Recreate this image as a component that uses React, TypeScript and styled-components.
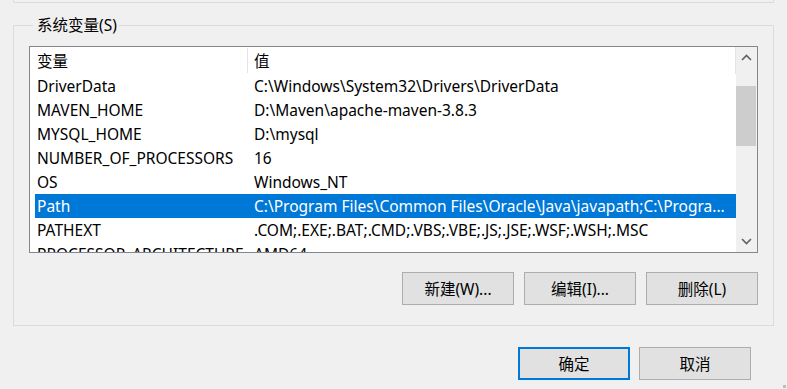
import { FC } from 'react'
import styled, { createGlobalStyle } from 'styled-components'

const GlobalStyle = createGlobalStyle`
  html, body {
    margin: 0;
    padding: 0;
    background: #f0f0f0;
  }
  body {
    font-family: 'Noto Sans', 'Noto Sans CJK SC', sans-serif;
    font-size: 15.5px;
    color: #000;
  }
`

type Row = { name: string; value: string; selected?: boolean }

const rows: Row[] = [
  { name: 'DriverData', value: 'C:\\Windows\\System32\\Drivers\\DriverData' },
  { name: 'MAVEN_HOME', value: 'D:\\Maven\\apache-maven-3.8.3' },
  { name: 'MYSQL_HOME', value: 'D:\\mysql' },
  { name: 'NUMBER_OF_PROCESSORS', value: '16' },
  { name: 'OS', value: 'Windows_NT' },
  {
    name: 'Path',
    value: 'C:\\Program Files\\Common Files\\Oracle\\Java\\javapath;C:\\Progra...',
    selected: true,
  },
  { name: 'PATHEXT', value: '.COM;.EXE;.BAT;.CMD;.VBS;.VBE;.JS;.JSE;.WSF;.WSH;.MSC' },
  { name: 'PROCESSOR_ARCHITECTURE', value: 'AMD64' },
]

const App: FC = () => {
  return (
    <Window>
      <GlobalStyle />
      <TopGroup />
      <Group>
        <Legend>系统变量(S)</Legend>
        <ListBox>
          <ListContent>
            <HeaderRow>
              <NameCell>变量</NameCell>
              <HeaderDivider />
              <ValueCell>值</ValueCell>
            </HeaderRow>
            {rows.map((r) => (
              <DataRow key={r.name} $selected={r.selected}>
                <NameCell>{r.name}</NameCell>
                <ValueCell>{r.value}</ValueCell>
              </DataRow>
            ))}
          </ListContent>
          <ScrollBar>
            <ArrowBtn>
              <svg width="11" height="7" viewBox="0 0 11 7">
                <path d="M1 6 L5.5 1.5 L10 6" fill="none" stroke="#606060" strokeWidth="1.6" />
              </svg>
            </ArrowBtn>
            <Track>
              <Thumb />
            </Track>
            <ArrowBtn>
              <svg width="11" height="7" viewBox="0 0 11 7">
                <path d="M1 1 L5.5 5.5 L10 1" fill="none" stroke="#606060" strokeWidth="1.6" />
              </svg>
            </ArrowBtn>
          </ScrollBar>
        </ListBox>
        <ButtonRow>
          <Button>新建(W)...</Button>
          <Button>编辑(I)...</Button>
          <Button>删除(L)</Button>
        </ButtonRow>
      </Group>
      <Footer>
        <Button $primary>确定</Button>
        <Button>取消</Button>
      </Footer>
      <Grip />
    </Window>
  )
}

export default App

const Window = styled.div`
  position: relative;
  width: 787px;
  height: 389px;
  overflow: hidden;
  background: #f0f0f0;
`

const TopGroup = styled.div`
  margin-left: 13px;
  width: 759px;
  height: 2px;
  border: 1px solid #dcdcdc;
  border-top: none;
`

const Group = styled.fieldset`
  margin: 12px 0 0 13px;
  width: 761px;
  height: 311px;
  box-sizing: border-box;
  padding: 0 15px 0 15px;
  border: 1px solid #dcdcdc;
  display: flex;
  flex-direction: column;
  min-width: 0;
`

const Legend = styled.legend`
  margin-left: 4px;
  padding: 0 2px 0 4px;
  line-height: 20px;
  height: 20px;
`

const ListBox = styled.div`
  margin-top: 11px;
  height: 207px;
  width: 729px;
  box-sizing: border-box;
  border: 1px solid #828790;
  background: #fff;
  display: flex;
  overflow: hidden;
`

const ListContent = styled.div`
  flex: 1;
  min-width: 0;
  padding-left: 5px;
  overflow: hidden;
`

const HeaderRow = styled.div`
  position: relative;
  display: flex;
  align-items: center;
  height: 27px;
  border-right: 1px solid #e5e5e5;
`

const HeaderDivider = styled.div`
  position: absolute;
  left: 212px;
  top: 1px;
  bottom: 1px;
  width: 1px;
  background: #e5e5e5;
`

const DataRow = styled.div<{ $selected?: boolean }>`
  display: flex;
  align-items: center;
  height: 24px;
  flex-shrink: 0;
  background: ${(p) => (p.$selected ? '#0078d7' : 'transparent')};
  color: ${(p) => (p.$selected ? '#fff' : '#000')};
`

const NameCell = styled.div`
  width: 213px;
  box-sizing: border-box;
  padding-left: 2px;
  white-space: nowrap;
  overflow: hidden;
  flex-shrink: 0;
`

const ValueCell = styled.div`
  flex: 1;
  min-width: 0;
  padding-left: 6px;
  white-space: nowrap;
  overflow: hidden;
`

const ScrollBar = styled.div`
  width: 21px;
  flex-shrink: 0;
  background: #f0f0f0;
  display: flex;
  flex-direction: column;
`

const ArrowBtn = styled.div`
  height: 21px;
  display: flex;
  align-items: center;
  justify-content: center;
`

const Track = styled.div`
  flex: 1;
  padding-top: 18px;
`

const Thumb = styled.div`
  height: 60px;
  margin: 0 1px 0 0;
  background: #cdcdcd;
`

const ButtonRow = styled.div`
  margin-top: 19px;
  width: 729px;
  display: flex;
  justify-content: flex-end;
  gap: 10px;
`

const Button = styled.button<{ $primary?: boolean }>`
  width: 112px;
  height: 33px;
  box-sizing: border-box;
  font-family: inherit;
  font-size: 15.5px;
  color: #000;
  background: #e1e1e1;
  border: ${(p) => (p.$primary ? '2px solid #0078d7' : '1px solid #adadad')};
  padding: 0;
  margin: 0;
`

const Footer = styled.div`
  margin-top: 21px;
  width: 751px;
  display: flex;
  justify-content: flex-end;
  gap: 9px;
`

const Grip = styled.div`
  position: absolute;
  right: 1px;
  bottom: 1px;
  width: 3px;
  height: 3px;
  background: #bcbcbc;
`
